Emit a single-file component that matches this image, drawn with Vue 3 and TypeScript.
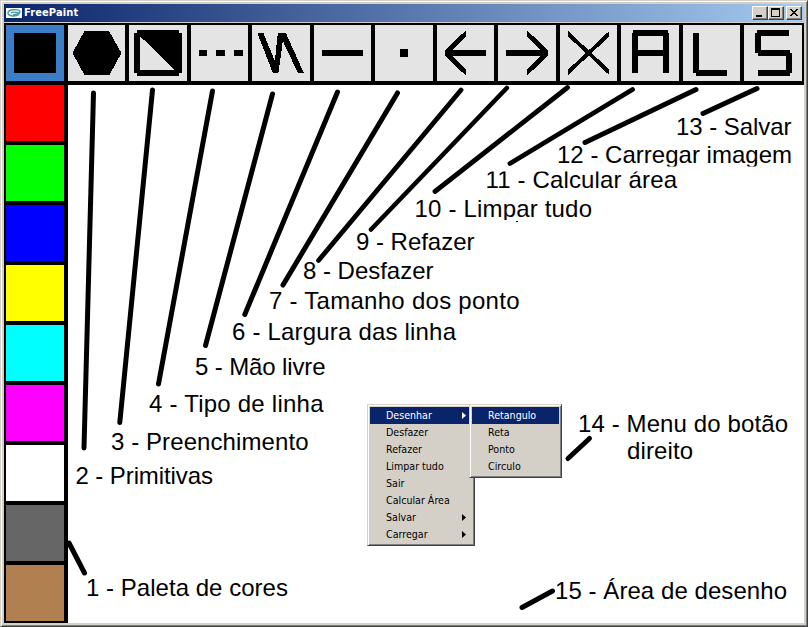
<script setup lang="ts">
interface Tool { name: string; path: string }
interface Note { text: string; x1: number; x2: number; y: number; clip?: string }
interface Entry { label: string; sub?: boolean; active?: boolean }

const W = 800 / 13
const box = (i: number) => `${(6 + W * i).toFixed(2)} 25 ${(W - 4).toFixed(2)} 56`

const tools: Tool[] = [
  { name: 'color', path: 'M14 33H56V73H14Z' },
  { name: 'shape', path: 'M84 31H108.5L121 53L109 75H84L72 53Z' },
  { name: 'fill', path: 'M137 30H179V33H182V73H179V76H137V73H134V33H137ZM140 36V70H175Z' },
  { name: 'dash', path: 'M199 50h8v6h-8zM216 50h9v6h-9zM234 50h9v6h-9z' },
  { name: 'free', path: 'M257.500 33H263.500L275 61L278 33H286L304 73H298L283 41L278.500 73H273Z' },
  { name: 'width', path: 'M322 50H363V56H322Z' },
  { name: 'point', path: 'M400 49H408V57H400Z' },
  { name: 'undo', path: 'M486 50H452L466 36V30L445 50V56L466 76V70L452 56H486Z' },
  { name: 'redo', path: 'M506 50H541L527 36V30L548 50V56L527 76V70L541 56H506Z' },
  { name: 'clear', path: 'M568 31L588.500 50.300L609 31V36.500L591.500 53L609 69.500V75L588.500 55.700L568 75V69.500L585.500 53L568 36.500Z' },
  { name: 'area', path: 'M632 33H633.500V30H668V33H669V73H663V56H638V73H632ZM638 36V50H663V36Z' },
  { name: 'load', path: 'M693 33H699V70H727V76H696V73H693Z' },
  { name: 'save', path: 'M757 30H789V36H761V50H790V53H792V73H790V76H758V70H786V56H758V53H755V33H757Z' },
]

const colors = ['#ff0000', '#00ff00', '#0000ff', '#ffff00', '#00ffff', '#ff00ff', '#ffffff', '#666666', '#b08050']

const leaders: number[][] = [
  [69, 543, 84.5, 573, 5],
  [93.5, 93, 84, 448, 5],
  [152.5, 90, 119.8, 422.5, 5],
  [212.5, 91, 158.5, 384, 5],
  [272.5, 94, 205.5, 345.5, 5],
  [337.5, 92, 244.8, 314.5, 5],
  [397.5, 93, 283, 285, 5],
  [461, 90, 318.5, 260.5, 4.8],
  [506.8, 88, 371, 229.5, 4.6],
  [567.5, 87.5, 435, 191.5, 4.8],
  [632.5, 89.5, 510, 163.5, 4.8],
  [696, 89.5, 585, 142.5, 5],
  [757, 88.5, 703, 113.5, 5],
  [589.5, 438.5, 568, 458.5, 5],
  [552.5, 591, 522, 607.5, 5],
]

const notes: Note[] = [
  { text: '1 - Paleta de cores', x1: 86, x2: 288, y: 596 },
  { text: '2 - Primitivas', x1: 75.5, x2: 213, y: 484 },
  { text: '3 - Preenchimento', x1: 111, x2: 308.5, y: 449.5 },
  { text: '4 - Tipo de linha', x1: 149, x2: 323.5, y: 412 },
  { text: '5 - Mão livre', x1: 195, x2: 325.5, y: 374.5 },
  { text: '6 - Largura das linha', x1: 232, x2: 456, y: 340 },
  { text: '7 - Tamanho dos ponto', x1: 269, x2: 519.5, y: 308.5 },
  { text: '8 - Desfazer', x1: 303, x2: 433.5, y: 278.5 },
  { text: '9 - Refazer', x1: 356, x2: 474.5, y: 250 },
  { text: '10 - Limpar tudo', x1: 414.5, x2: 592, y: 217, clip: 'clip10' },
  { text: '11 - Calcular área', x1: 485.5, x2: 677, y: 188, clip: 'clip11' },
  { text: '12 - Carregar imagem', x1: 557, x2: 792, y: 163, clip: 'clip12' },
  { text: '13 - Salvar', x1: 676, x2: 791.5, y: 135 },
  { text: '14 - Menu do botão', x1: 578, x2: 788, y: 432 },
  { text: 'direito', x1: 627, x2: 693, y: 459 },
  { text: '15 - Área de desenho', x1: 555, x2: 787, y: 599 },
]

const menu: Entry[] = [
  { label: 'Desenhar', sub: true, active: true },
  { label: 'Desfazer' },
  { label: 'Refazer' },
  { label: 'Limpar tudo' },
  { label: 'Sair' },
  { label: 'Calcular Área' },
  { label: 'Salvar', sub: true },
  { label: 'Carregar', sub: true },
]
const submenu: Entry[] = [{ label: 'Retangulo', active: true }, { label: 'Reta' }, { label: 'Ponto' }, { label: 'Circulo' }]
</script>

<template>
  <div class="window">
    <header class="titlebar">
      <svg class="logo" width="16" height="10" viewBox="0 0 16 10">
        <rect width="16" height="10" fill="#f4fafa" />
        <path d="M14 3C11 1 3 1 2 4.500S9 9 13 6.500M5 5C7 3 10 4 14 5.500M7 6.500C9 7 12 6 14.500 3.500" fill="none" stroke="#4a98a4" stroke-width="1.400" />
      </svg>
      <span class="title">FreePaint</span>
      <div class="controls">
        <button class="ctl" aria-label="Minimizar"><svg width="12" height="10"><path d="M2 7H8V9H2Z" /></svg></button>
        <button class="ctl" aria-label="Maximizar"><svg width="12" height="10"><path d="M1 0H10V9H1ZM2 2V8H9V2Z" fill-rule="evenodd" /></svg></button>
        <button class="ctl close" aria-label="Fechar"><svg width="12" height="10"><path d="M2 1H4L6 3.200L8 1H10L7 4.500L10 8H8L6 5.800L4 8H2L5 4.500Z" /></svg></button>
      </div>
    </header>
    <div class="client">
      <nav class="toolbar">
        <div v-for="(t, i) in tools" :key="t.name" class="tool" :class="{ current: i === 0 }">
          <svg :viewBox="box(i)" preserveAspectRatio="none"><path :d="t.path" fill-rule="evenodd" /></svg>
        </div>
      </nav>
      <main class="work">
        <aside class="palette">
          <div v-for="c in colors" :key="c" class="swatch" :style="{ background: c }"></div>
        </aside>
        <section class="canvas"></section>
      </main>
    </div>

    <svg class="notes" width="808" height="627" viewBox="0 0 808 627">
      <defs>
        <clipPath id="clip10"><rect x="400" y="190" width="220" height="30" /></clipPath>
        <clipPath id="clip11"><rect x="470" y="171.500" width="230" height="30" /></clipPath>
        <clipPath id="clip12"><rect x="540" y="140" width="260" height="26.500" /></clipPath>
      </defs>
      <line v-for="(l, i) in leaders" :key="i" :x1="l[0]" :y1="l[1]" :x2="l[2]" :y2="l[3]" :stroke-width="l[4]" />
      <text v-for="n in notes" :key="n.text" :x="n.x1" :y="n.y" :textLength="n.x2 - n.x1" :clip-path="n.clip ? `url(#${n.clip})` : undefined">{{ n.text }}</text>
      <rect x="516" y="221" width="2" height="1" />
    </svg>

    <ul class="menu main">
      <li v-for="m in menu" :key="m.label" :class="{ active: m.active }">
        <span>{{ m.label }}</span>
        <svg v-if="m.sub" width="4" height="7" viewBox="0 0 4 7"><path d="M0 0L4 3.500L0 7Z" /></svg>
      </li>
    </ul>
    <ul class="menu side">
      <li v-for="m in submenu" :key="m.label" :class="{ active: m.active }"><span>{{ m.label }}</span></li>
    </ul>
  </div>
</template>

<style>
body { margin: 0; overflow: hidden; }
</style>

<style scoped>
* { box-sizing: border-box; }
.window {
  position: relative;
  width: 808px;
  height: 627px;
  padding: 3px;
  border: 1px solid;
  border-color: #d4d0c8 #404040 #404040 #d4d0c8;
  background: #d4d0c8;
  box-shadow: inset 1px 1px #fff, inset -1px -1px #808080;
  font-family: "DejaVu Sans Condensed", "DejaVu Sans", sans-serif;
  font-stretch: condensed;
}
.titlebar {
  display: flex;
  align-items: center;
  height: 18px;
  padding: 0 2px;
  background: linear-gradient(90deg, #0a246a, #a6caf0);
}
.title { margin-left: 2px; color: #fff; font-size: 11px; font-weight: bold; line-height: 18px; letter-spacing: 0.120px; }
.controls { display: flex; margin-left: auto; }
.ctl {
  width: 16px;
  height: 14px;
  padding: 1px;
  border: 1px solid;
  border-color: #fff #404040 #404040 #fff;
  background: #d4d0c8;
  box-shadow: inset -1px -1px #808080;
}
.ctl svg { display: block; shape-rendering: crispEdges; }
.close { margin-left: 2px; }
.client { margin-top: 1px; height: 600px; background: #000; }
.toolbar { display: grid; grid-template-columns: repeat(13, 1fr); height: 60px; }
.tool { min-width: 0; border: 2px solid #000; background: #e4e4e4; }
.tool svg { display: block; width: 100%; height: 56px; shape-rendering: crispEdges; }
.tool.current { background: #3b7dc6; }
.work { display: flex; height: 540px; }
.palette { display: flex; flex-direction: column; gap: 4px; width: 64px; padding: 2px 4px 2px 2px; background: #000; }
.swatch { flex: 1; }
.canvas { flex: 1; margin-top: 2px; background: #fff; }
.notes { position: absolute; left: -1px; top: -1px; pointer-events: none; }
.notes line { stroke: #000; stroke-linecap: round; }
.notes text { font-family: "Liberation Sans", Arial, sans-serif; font-size: 24px; fill: #000; }
.menu {
  position: absolute;
  margin: 0;
  padding: 2px;
  border: 1px solid;
  border-color: #d4d0c8 #404040 #404040 #d4d0c8;
  background: #d4d0c8;
  box-shadow: inset 1px 1px #fff, inset -1px -1px #808080;
  list-style: none;
  font-size: 10.600px;
  color: #000;
}
.main { left: 366px; top: 403px; width: 108px; }
.side { left: 468px; top: 403px; width: 93px; }
.menu li { display: flex; align-items: center; height: 17px; padding: 0 4px 0 16px; line-height: 17px; white-space: nowrap; }
.menu li svg { margin-left: auto; fill: currentColor; }
.main li svg { margin-right: 2px; }
.menu li.active { background: #0a246a; color: #fff; }
</style>
